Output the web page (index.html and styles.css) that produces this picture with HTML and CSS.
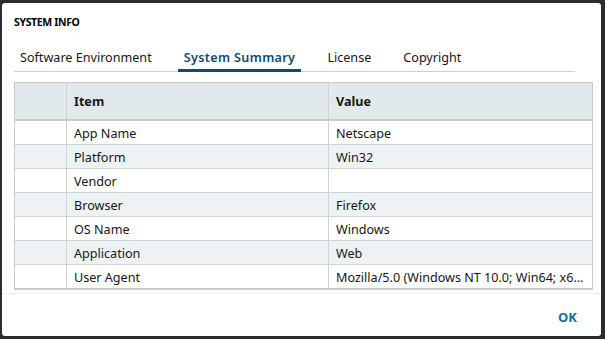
FILE: index.html
```html
<!DOCTYPE html>
<html>
<head>
<meta charset="utf-8">
<link rel="stylesheet" href="styles.css">
</head>
<body>
<div class="dialog">
  <div class="title">SYSTEM INFO</div>
  <div class="tabs">
    <div class="tab">Software Environment</div>
    <div class="tab active">System Summary</div>
    <div class="tab">License</div>
    <div class="tab">Copyright</div>
  </div>
  <div class="grid">
    <div class="row head">
      <div class="c0"></div>
      <div class="c1">Item</div>
      <div class="c2">Value</div>
    </div>
    <div class="row"><div class="c0"></div><div class="c1">App Name</div><div class="c2">Netscape</div></div>
    <div class="row alt"><div class="c0"></div><div class="c1">Platform</div><div class="c2">Win32</div></div>
    <div class="row"><div class="c0"></div><div class="c1">Vendor</div><div class="c2"></div></div>
    <div class="row alt"><div class="c0"></div><div class="c1">Browser</div><div class="c2">Firefox</div></div>
    <div class="row"><div class="c0"></div><div class="c1">OS Name</div><div class="c2">Windows</div></div>
    <div class="row alt"><div class="c0"></div><div class="c1">Application</div><div class="c2">Web</div></div>
    <div class="row last"><div class="c0"></div><div class="c1">User Agent</div><div class="c2">Mozilla/5.0 (Windows NT 10.0; Win64; x6…</div></div>
  </div>
  <div class="footer">
    <span class="ok">OK</span>
  </div>
</div>
</body>
</html>
```
FILE: styles.css
```css
html, body {
  margin: 0;
  padding: 0;
  background: #2c2c2c;
  height: 100%;
}
body {
  padding: 3px 0 0 2px;
  box-sizing: border-box;
  font-family: "Noto Sans", "Open Sans", sans-serif;
  color: #161616;
}
.dialog {
  width: 599px;
  height: 333px;
  background: #fff;
  border-radius: 3px;
  display: flex;
  flex-direction: column;
  box-sizing: border-box;
}
.title {
  padding: 13px 12px 0;
  font-size: 10.5px;
  font-weight: 700;
  line-height: 12px;
  letter-spacing: -0.35px;
  color: #000;
}
.tabs {
  display: flex;
  gap: 20px;
  margin: 21px 0 0 12px;
  width: 561px;
  border-bottom: 1px solid #cfcfcf;
}
.tab {
  font-size: 12.6px;
  line-height: 16px;
  padding: 1px 6px 3px;
  border-bottom: 3px solid transparent;
  margin-bottom: -1px;
  color: #161616;
}
.tab.active {
  color: #0f4a6f;
  font-weight: 600;
  letter-spacing: 0.35px;
  border-bottom-color: #0f4a6f;
}
.grid {
  margin: 10px 0 0 12px;
  width: 577px;
  border: 1px solid #cacaca;
  border-bottom-width: 2px;
  font-size: 12.6px;
}
.row {
  display: grid;
  grid-template-columns: 51px 262px 1fr;
  grid-template-rows: 23px;
  height: 24px;
  border-bottom: 1px solid #cfd3d5;
  box-sizing: border-box;
}
.row.last { border-bottom: none; height: 23px; }
.row > div {
  padding: 3px 7px 0;
  line-height: 20px;
  white-space: nowrap;
  overflow: hidden;
  border-left: 1px solid #cfd3d5;
}
.row > .c0 { border-left: none; }
.row.alt { background: #edf3f5; }
.row.head {
  height: 38px;
  grid-template-rows: 36px;
  background: #e2e9ec;
  border-bottom: 2px solid #cacaca;
  font-weight: 700;
}
.row.head > div { padding-top: 2px; line-height: 34px; }
.footer {
  margin-top: 3px;
  border-top: 1px solid #eeeeee;
  flex: 1;
  display: flex;
  justify-content: flex-end;
  align-items: flex-start;
  padding: 15px 24px 0 0;
}
.ok {
  font-size: 13px;
  font-weight: 700;
  color: #1a6c9c;
  line-height: 16px;
}
```
